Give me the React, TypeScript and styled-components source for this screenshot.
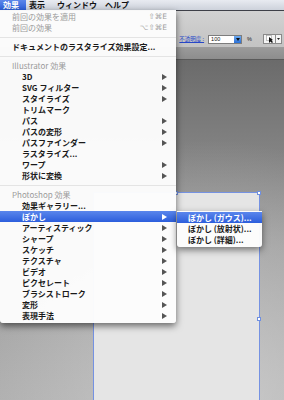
import React from "react";
import styled, { createGlobalStyle } from "styled-components";

const Global = createGlobalStyle`
  html, body { margin: 0; padding: 0; background: #888; }
  body { font-family: "Noto Sans CJK JP", "Liberation Sans", sans-serif; }
  * { box-sizing: border-box; }
`;

const Root = styled.div`
  position: relative;
  width: 284px;
  height: 400px;
  overflow: hidden;
  display: flex;
  flex-direction: column;
  font-family: "Noto Sans CJK JP", "Liberation Sans", sans-serif;
`;

const MenuBar = styled.div`
  height: 11px;
  flex: none;
  display: flex;
  align-items: stretch;
  background: linear-gradient(#e8ebf1, #cdd2db);
  border-bottom: 1px solid #3e4048;
`;

const MenuTitle = styled.div<{ $active?: boolean; $w: number }>`
  width: ${(p) => p.$w}px;
  padding-left: 3px;
  font-size: 8px;
  font-weight: 700;
  line-height: 10px;
  color: ${(p) => (p.$active ? "#fff" : "#111")};
  background: ${(p) => (p.$active ? "linear-gradient(#5c87ea, #2c5fd9)" : "transparent")};
  white-space: nowrap;
`;

const ControlBar = styled.div`
  height: 37px;
  flex: none;
  display: flex;
  align-items: flex-end;
  justify-content: flex-end;
  padding: 0 2px 3px 0;
  background: linear-gradient(#d2d2d2, #c3c3c3);
  border-bottom: 1px solid #9c9c9c;
`;

const OpacityLabel = styled.span`
  font-size: 5.5px;
  color: #2747c8;
  text-decoration: underline;
  line-height: 9px;
  margin-right: 4px;
`;

const NumField = styled.div`
  display: flex;
  height: 9px;
  border: 1px solid #7d7d7d;
  background: #fff;
`;

const NumText = styled.span`
  width: 25px;
  font-family: "Liberation Sans", sans-serif;
  font-size: 5.5px;
  line-height: 7px;
  padding-left: 2px;
  color: #111;
`;

const NumButton = styled.div`
  width: 7px;
  background: linear-gradient(#6aa9f0, #2a6fd6);
  display: flex;
  align-items: center;
  justify-content: center;
`;

const Percent = styled.span`
  font-family: "Liberation Sans", sans-serif;
  font-size: 5.5px;
  line-height: 9px;
  color: #222;
  margin: 0 11px 0 5px;
`;

const StyleBox = styled.div`
  display: flex;
  height: 10px;
  border: 1px solid #8a8a8a;
  background: #f4f4f4;
`;

const StyleSwatch = styled.div`
  width: 12px;
  border-right: 1px solid #8a8a8a;
  display: flex;
  align-items: center;
  justify-content: center;
`;

const StyleArrow = styled.div`
  width: 5px;
  display: flex;
  align-items: center;
  justify-content: center;
`;

const TabStrip = styled.div`
  height: 12px;
  flex: none;
  background: linear-gradient(#9a9a9a, #8d8d8d);
  border-bottom: 1px solid #5a5a5a;
`;

const Canvas = styled.div`
  flex: 1;
  overflow: hidden;
  padding: 132px 0 0 93px;
  background: radial-gradient(ellipse 260px 260px at 75% 100%, rgba(215, 215, 215, 0.7), rgba(215, 215, 215, 0) 100%),
    linear-gradient(#6b6b6b, #9b9b9b 55%, #acacac);
`;

const Artboard = styled.div`
  position: relative;
  width: 167px;
  height: 254px;
  background: #e5e5e5;
  border: 1px solid #7592e2;
`;

const Handle = styled.div<{ $x: string; $y: string }>`
  position: absolute;
  left: ${(p) => p.$x};
  top: ${(p) => p.$y};
  width: 4px;
  height: 4px;
  margin: -2.5px 0 0 -2.5px;
  background: #fff;
  border: 1px solid #6f8fe0;
`;

const Menu = styled.div`
  position: absolute;
  left: 0;
  top: 10px;
  width: 176px;
  padding: 1px 0 2px;
  background: rgba(252, 252, 252, 0.98);
  box-shadow: 0 3px 7px rgba(0, 0, 0, 0.55);
  border-radius: 0 0 3px 3px;
`;

const Row = styled.div<{ $indent: number; $tone?: "dim" | "head" | "sel" }>`
  position: relative;
  height: 11px;
  display: flex;
  align-items: center;
  padding: 0 9px 0 ${(p) => p.$indent}px;
  font-size: 8px;
  font-weight: ${(p) => (p.$tone === "dim" || p.$tone === "head" ? 400 : 700)};
  line-height: 11px;
  white-space: nowrap;
  color: ${(p) => (p.$tone === "dim" || p.$tone === "head" ? "#9a9a9a" : p.$tone === "sel" ? "#fff" : "#1a1a1a")};
  background: ${(p) => (p.$tone === "sel" ? "linear-gradient(#5a86ec, #2c5edc)" : "transparent")};
`;

const Label = styled.span`
  flex: 1;
`;

const Shortcut = styled.span`
  font-family: "DejaVu Sans", sans-serif;
  font-size: 7.5px;
  color: #a0a0a0;
`;

const Sep = styled.div`
  height: 8px;
  display: flex;
  align-items: center;
  &::after {
    content: "";
    flex: 1;
    height: 1px;
    background: #e4e4e4;
  }
`;

const SubMenu = styled.div`
  position: absolute;
  left: 177px;
  top: 0;
  width: 85px;
  padding: 1px 0 2px;
  background: rgba(252, 252, 252, 0.98);
  box-shadow: 0 3px 7px rgba(0, 0, 0, 0.5);
  border-radius: 0 0 3px 3px;
`;

const Arrow = ({ light }: { light?: boolean }) => (
  <svg width="5" height="6" viewBox="0 0 5 6">
    <polygon points="0,0 5,3 0,6" fill={light ? "#fff" : "#555"} />
  </svg>
);

type Item =
  | { kind: "sep" }
  | { kind: "item"; label: string; indent: number; tone?: "dim" | "head" | "sel"; sub?: boolean; shortcut?: string; submenu?: boolean };

const items: Item[] = [
  { kind: "item", label: "前回の効果を適用", indent: 12, tone: "dim", shortcut: "⇧⌘E" },
  { kind: "item", label: "前回の効果", indent: 12, tone: "dim", shortcut: "⌥⇧⌘E" },
  { kind: "sep" },
  { kind: "item", label: "ドキュメントのラスタライズ効果設定...", indent: 12 },
  { kind: "sep" },
  { kind: "item", label: "Illustrator 効果", indent: 12, tone: "head" },
  { kind: "item", label: "3D", indent: 22, sub: true },
  { kind: "item", label: "SVG フィルター", indent: 22, sub: true },
  { kind: "item", label: "スタイライズ", indent: 22, sub: true },
  { kind: "item", label: "トリムマーク", indent: 22 },
  { kind: "item", label: "パス", indent: 22, sub: true },
  { kind: "item", label: "パスの変形", indent: 22, sub: true },
  { kind: "item", label: "パスファインダー", indent: 22, sub: true },
  { kind: "item", label: "ラスタライズ...", indent: 22 },
  { kind: "item", label: "ワープ", indent: 22, sub: true },
  { kind: "item", label: "形状に変換", indent: 22, sub: true },
  { kind: "sep" },
  { kind: "item", label: "Photoshop 効果", indent: 12, tone: "head" },
  { kind: "item", label: "効果ギャラリー...", indent: 22 },
  { kind: "item", label: "ぼかし", indent: 22, tone: "sel", sub: true, submenu: true },
  { kind: "item", label: "アーティスティック", indent: 22, sub: true },
  { kind: "item", label: "シャープ", indent: 22, sub: true },
  { kind: "item", label: "スケッチ", indent: 22, sub: true },
  { kind: "item", label: "テクスチャ", indent: 22, sub: true },
  { kind: "item", label: "ビデオ", indent: 22, sub: true },
  { kind: "item", label: "ピクセレート", indent: 22, sub: true },
  { kind: "item", label: "ブラシストローク", indent: 22, sub: true },
  { kind: "item", label: "変形", indent: 22, sub: true },
  { kind: "item", label: "表現手法", indent: 22, sub: true },
];

const subItems = ["ぼかし (ガウス)...", "ぼかし (放射状)...", "ぼかし (詳細)..."];

export default function App() {
  return (
    <Root>
      <Global />
      <MenuBar>
        <MenuTitle $active $w={26}>効果</MenuTitle>
        <MenuTitle $w={28}>表示</MenuTitle>
        <MenuTitle $w={48}>ウィンドウ</MenuTitle>
        <MenuTitle $w={40}>ヘルプ</MenuTitle>
      </MenuBar>
      <ControlBar>
        <OpacityLabel>不透明度 :</OpacityLabel>
        <NumField>
          <NumText>100</NumText>
          <NumButton>
            <svg width="4" height="3" viewBox="0 0 4 3">
              <polygon points="0,0 4,0 2,3" fill="#111" />
            </svg>
          </NumButton>
        </NumField>
        <Percent>%</Percent>
        <StyleBox>
          <StyleSwatch>
            <svg width="8" height="8" viewBox="0 0 8 8">
              <rect x="0.5" y="0.5" width="5" height="5" fill="#fff" stroke="#999" strokeWidth="0.6" />
              <polygon points="3,2 3,8 4.5,6.5 6,8 7,7 5.5,5.5 7,5" fill="#111" />
            </svg>
          </StyleSwatch>
          <StyleArrow>
            <svg width="3" height="2" viewBox="0 0 3 2">
              <polygon points="0,0 3,0 1.5,2" fill="#222" />
            </svg>
          </StyleArrow>
        </StyleBox>
      </ControlBar>
      <TabStrip />
      <Canvas>
        <Artboard>
          <Handle $x="50%" $y="0" />
          <Handle $x="100%" $y="0" />
          <Handle $x="100%" $y="50%" />
        </Artboard>
      </Canvas>
      <Menu>
        {items.map((it, i) =>
          it.kind === "sep" ? (
            <Sep key={i} />
          ) : (
            <Row key={i} $indent={it.indent} $tone={it.tone}>
              <Label>{it.label}</Label>
              {it.shortcut && <Shortcut>{it.shortcut}</Shortcut>}
              {it.sub && <Arrow light={it.tone === "sel"} />}
              {it.submenu && (
                <SubMenu>
                  {subItems.map((s, j) => (
                    <Row key={s} $indent={11} $tone={j === 0 ? "sel" : undefined}>
                      <Label>{s}</Label>
                    </Row>
                  ))}
                </SubMenu>
              )}
            </Row>
          )
        )}
      </Menu>
    </Root>
  );
}
